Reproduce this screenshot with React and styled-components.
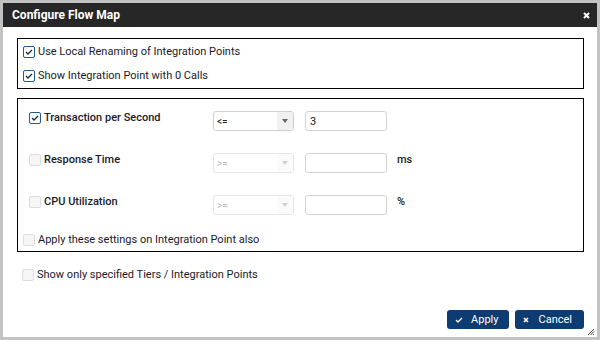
import React from 'react';
import styled, { createGlobalStyle } from 'styled-components';

const GlobalStyle = createGlobalStyle`
  html, body {
    margin: 0;
    padding: 0;
    background: #c3c3c3;
  }
  body {
    font-family: Roboto, "Liberation Sans", Arial, sans-serif;
  }
`;

const Page = styled.div`
  width: 600px;
  height: 340px;
  padding: 3px;
  box-sizing: border-box;
`;

const Dialog = styled.div`
  position: relative;
  width: 594px;
  height: 334px;
  background: #fff;
  display: flex;
  flex-direction: column;
`;

const TitleBar = styled.div`
  height: 24px;
  background: #272727;
  color: #fff;
  display: flex;
  align-items: center;
  justify-content: space-between;
  padding: 0 7px 0 9px;
  font-size: 12px;
  font-weight: 700;
`;

const CloseButton = styled.span`
  display: flex;
  width: 7px;
  height: 7px;
  cursor: pointer;
`;

const Body = styled.div`
  flex: 1;
  display: flex;
  flex-direction: column;
  padding: 11px 13px 8px 14px;
`;

const Group = styled.div`
  border: 1px solid #000;
  display: flex;
  flex-direction: column;
  padding: ${(p) => p.$padding};
  gap: ${(p) => p.$gap || 0}px;
  margin-bottom: ${(p) => p.$mb || 0}px;
`;

const CheckRow = styled.label`
  display: flex;
  align-items: center;
  gap: 3px;
  height: 12px;
  font-size: 11px;
  line-height: 12px;
  color: #1a1a28;
  font-weight: ${(p) => p.$weight || 400};
  padding-left: ${(p) => p.$indent || 0}px;
  margin-top: ${(p) => p.$mt || 0}px;
`;

const Box = styled.span`
  width: 12px;
  height: 12px;
  box-sizing: border-box;
  border-radius: 2px;
  border: 1px solid ${(p) => (p.$checked ? '#1e5b8f' : '#dcdcdc')};
  background: ${(p) => (p.$checked ? '#fff' : '#f6f6f6')};
  display: flex;
  align-items: center;
  justify-content: center;
  flex: none;
`;

const MetricRow = styled.div`
  display: flex;
  align-items: flex-start;
  height: 20px;
`;

const MetricLabel = styled(CheckRow)`
  width: 184px;
  margin-top: 1px;
  flex: none;
`;

const Select = styled.div`
  width: 81px;
  height: 20px;
  box-sizing: border-box;
  border: 1px solid ${(p) => (p.$disabled ? '#e6e6e6' : '#cfcfcf')};
  border-radius: 3px;
  display: flex;
  overflow: hidden;
  font-size: 10px;
  color: ${(p) => (p.$disabled ? '#b8b8b8' : '#222')};
`;

const SelectValue = styled.span`
  flex: 1;
  padding-left: 3px;
  display: flex;
  align-items: center;
`;

const SelectArrow = styled.span`
  width: 16px;
  background: ${(p) => (p.$disabled ? '#fafafa' : '#f1f1f1')};
  display: flex;
  align-items: center;
  justify-content: center;
  &::after {
    content: '';
    border-left: 3.5px solid transparent;
    border-right: 3.5px solid transparent;
    border-top: 4px solid ${(p) => (p.$disabled ? '#d0d0d0' : '#666')};
  }
`;

const TextInput = styled.div`
  width: 82px;
  height: 20px;
  box-sizing: border-box;
  margin-left: 11px;
  border: 1px solid #d3d3d3;
  border-radius: 3px;
  font-size: 11px;
  color: #222;
  display: flex;
  align-items: center;
  padding-left: 4px;
`;

const Unit = styled.span`
  margin-left: 10px;
  font-size: 11px;
  font-weight: 500;
  line-height: 14px;
  color: #222;
`;

const Footer = styled.div`
  margin-top: auto;
  display: flex;
  justify-content: flex-end;
  gap: 6px;
`;

const Button = styled.button`
  height: 19px;
  padding: 0 ${(p) => p.$pr}px 0 ${(p) => p.$pl}px;
  border: none;
  border-radius: 3px;
  background: #0c3c71;
  color: #fff;
  font-family: Roboto, "Liberation Sans", Arial, sans-serif;
  font-size: 11px;
  display: flex;
  align-items: center;
  gap: ${(p) => p.$gap}px;
  cursor: pointer;
`;

const Grip = styled.svg`
  position: absolute;
  right: 2px;
  bottom: 1px;
`;

const Tick = ({ color = '#1a2a40' }) => (
  <svg width="8" height="6" viewBox="0 0 8 6">
    <path d="M1 3 L3 5 L7 1" fill="none" stroke={color} strokeWidth="1.3" />
  </svg>
);

const Check = ({ checked }) => <Box $checked={checked}>{checked && <Tick />}</Box>;

const metrics = [
  { label: 'Transaction per Second', checked: true, op: '<=', value: '3', unit: '' },
  { label: 'Response Time', checked: false, op: '>=', value: '', unit: 'ms' },
  { label: 'CPU Utilization', checked: false, op: '>=', value: '', unit: '%' }
];

export default function App() {
  return (
    <>
      <GlobalStyle />
      <Page>
        <Dialog>
          <TitleBar>
            <span>Configure Flow Map</span>
            <CloseButton>
              <svg width="7" height="7" viewBox="0 0 7 7">
                <path d="M1 1 L6 6 M6 1 L1 6" stroke="#fff" strokeWidth="2" />
              </svg>
            </CloseButton>
          </TitleBar>
          <Body>
            <Group $padding="7px 5px 6px" $gap={12} $mb={9}>
              <CheckRow>
                <Check checked />
                Use Local Renaming of Integration Points
              </CheckRow>
              <CheckRow>
                <Check checked />
                Show Integration Point with 0 Calls
              </CheckRow>
            </Group>
            <Group $padding="12px 5px 5px" $gap={22}>
              {metrics.map((m) => (
                <MetricRow key={m.label}>
                  <MetricLabel $indent={6} $weight={500}>
                    <Check checked={m.checked} />
                    {m.label}
                  </MetricLabel>
                  <Select $disabled={!m.checked}>
                    <SelectValue>{m.op}</SelectValue>
                    <SelectArrow $disabled={!m.checked} />
                  </Select>
                  <TextInput>{m.value}</TextInput>
                  {m.unit && <Unit>{m.unit}</Unit>}
                </MetricRow>
              ))}
              <CheckRow $mt={-3}>
                <Check />
                Apply these settings on Integration Point also
              </CheckRow>
            </Group>
            <CheckRow $indent={5} $mt={17}>
              <Check />
              Show only specified Tiers / Integration Points
            </CheckRow>
            <Footer>
              <Button $pl={8} $pr={10} $gap={8}>
                <Tick color="#fff" />
                Apply
              </Button>
              <Button $pl={8} $pr={12} $gap={10}>
                <svg width="6" height="6" viewBox="0 0 6 6">
                  <path d="M1 1 L5 5 M5 1 L1 5" stroke="#fff" strokeWidth="1.6" />
                </svg>
                Cancel
              </Button>
            </Footer>
          </Body>
          <Grip width="8" height="8" viewBox="0 0 8 8">
            <path d="M7 1 L1 7 M7 3.5 L3.5 7 M7 6 L6 7" stroke="#444" strokeWidth="1" />
          </Grip>
        </Dialog>
      </Page>
    </>
  );
}
